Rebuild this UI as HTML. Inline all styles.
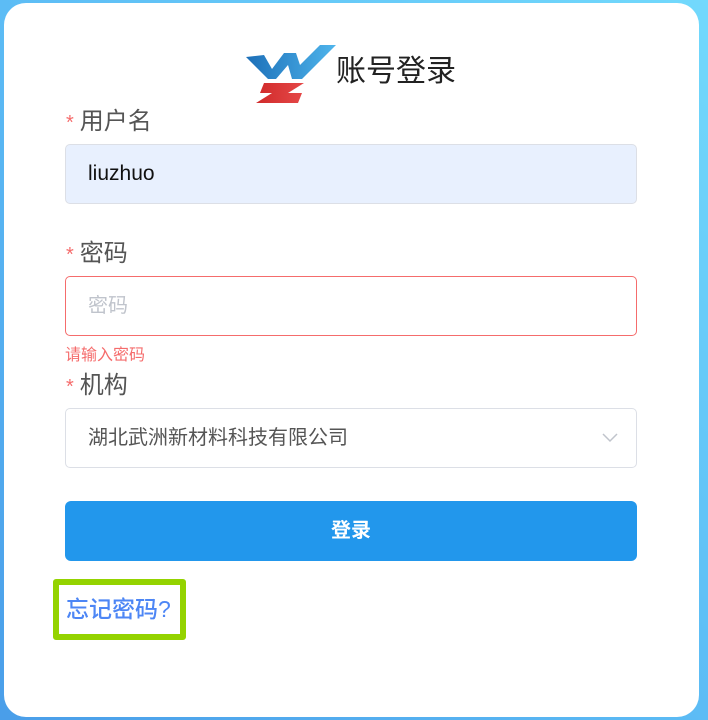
<!DOCTYPE html>
<html><head><meta charset="utf-8"><style>
*{box-sizing:border-box;margin:0;padding:0}
body{width:708px;height:720px;overflow:hidden;background:linear-gradient(225deg,#72d9fc 0%,#5cbcf5 50%,#4a9ee9 100%);font-family:"Liberation Sans","Noto Sans CJK SC",sans-serif;position:relative}
.card{position:absolute;left:4px;top:3px;width:695px;height:714px;background:#fff;border-radius:22px}
.title{position:absolute;left:336px;top:52px;font-size:30px;color:#222;line-height:40px}
.lbl{position:absolute;left:66px;font-size:24px;color:#555;line-height:30px}
.lbl b{color:#f56c6c;font-weight:normal;font-size:20px;margin-right:6px}
.inp{position:absolute;left:65px;width:572px;height:60px;border:1px solid #dcdfe6;border-radius:5px;font-size:21px;padding-left:22px;line-height:58px}
.btn{position:absolute;left:65px;top:501px;width:572px;height:60px;background:#2297ec;border-radius:6px;color:#fff;font-size:20px;font-weight:bold;text-align:center;line-height:60px}
.fg{position:absolute;left:53px;top:579px;width:133px;height:61px;border:6px solid #94d300;border-radius:3px;color:#4d86f5;font-size:23px;font-weight:500;line-height:49px;padding-left:7px}
</style></head><body>
<div class="card"></div>
<svg style="position:absolute;left:244px;top:43px" width="92" height="62" viewBox="0 0 92 62">
<defs><linearGradient id="b" x1="0" y1="0" x2="1" y2="0"><stop offset="0" stop-color="#1c6fb8"/><stop offset="1" stop-color="#4fb5ec"/></linearGradient>
<linearGradient id="r" x1="0" y1="0" x2="1" y2="0"><stop offset="0" stop-color="#d02a2a"/><stop offset="1" stop-color="#e54848"/></linearGradient></defs>
<path d="M2 14 L20 12 L28 26 L40 10 L52 10 L56 22 L76 2 L92 2 L58 36 L48 36 L44 22 L32 36 L24 36 Z" fill="url(#b)"/>
<path d="M20 40 L60 40 L44 50 L58 50 L54 60 L12 60 L28 50 L16 50 Z" fill="url(#r)"/>
</svg>
<div class="title">账号登录</div>
<div class="lbl" style="top:107px"><b>*</b>用户名</div>
<div class="inp" style="top:144px;background:#e8f0fe;color:#111">liuzhuo</div>
<div class="lbl" style="top:239px"><b>*</b>密码</div>
<div class="inp" style="top:276px;border-color:#f56c6c;color:#c0c4cc;font-size:20px">密码</div>
<div style="position:absolute;left:65px;top:341px;font-size:16px;color:#f56c6c">请输入密码</div>
<div class="lbl" style="top:371px"><b>*</b>机构</div>
<div class="inp" style="top:408px;color:#555;font-size:20px">湖北武洲新材料科技有限公司
<svg style="position:absolute;right:18px;top:24px" width="16" height="10" viewBox="0 0 16 10"><path d="M1 1 L8 8 L15 1" fill="none" stroke="#c0c4cc" stroke-width="1.5"/></svg></div>
<div class="btn">登录</div>
<div class="fg">忘记密码?</div>
</body></html>
